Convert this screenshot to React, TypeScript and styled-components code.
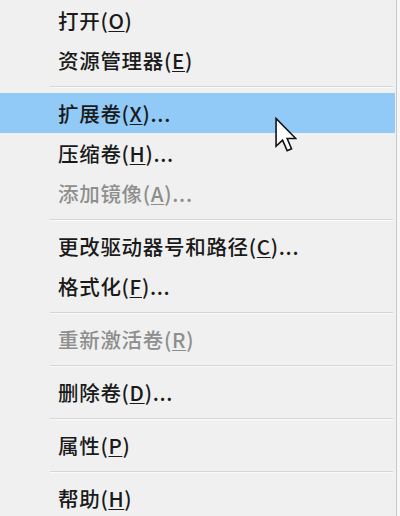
import React, { FunctionComponent } from 'react'
import styled, { createGlobalStyle } from 'styled-components'

const GlobalStyle = createGlobalStyle`
  html, body {
    margin: 0;
    padding: 0;
    background: #f7f7f7;
  }
  body {
    width: 400px;
    height: 516px;
    overflow: hidden;
  }
`

const Menu = styled.div`
  position: relative;
  width: 396px;
  height: 516px;
  overflow: hidden;
  background: #f0f0f0;
  border-right: 1px solid #c9c9c9;
  font-family: "Noto Sans CJK SC", "Noto Sans", sans-serif;
  font-size: 20.5px;
  font-weight: 500;
`

const Item = styled.div<{ $active?: boolean; $disabled?: boolean }>`
  display: flex;
  align-items: center;
  height: 40px;
  padding-left: 58px;
  margin-right: 1px;
  color: ${p => (p.$disabled ? '#8e8e8e' : '#1a1a1a')};
  background: ${p => (p.$active ? '#91c9f7' : 'transparent')};
  white-space: nowrap;
  letter-spacing: 0.7px;
`

const Key = styled.span`
  text-decoration: underline;
  text-underline-offset: 2px;
  text-decoration-thickness: 1px;
`

const Separator = styled.div`
  height: 13px;
  display: flex;
  align-items: center;
  padding: 0 3px 0 50px;

  &::after {
    content: '';
    flex: 1;
    height: 1px;
    background: #d6d6d6;
    box-shadow: 0 1px 0 #fafafa;
  }
`

const Cursor = styled.svg`
  position: absolute;
  left: 275px;
  top: 117px;
  width: 22px;
  height: 36px;
`

type Entry =
  | { sep: true }
  | { label: string; key: string; tail?: string; active?: boolean; disabled?: boolean }

const entries: Entry[] = [
  { label: '打开', key: 'O' },
  { label: '资源管理器', key: 'E' },
  { sep: true },
  { label: '扩展卷', key: 'X', tail: '...', active: true },
  { label: '压缩卷', key: 'H', tail: '...' },
  { label: '添加镜像', key: 'A', tail: '...', disabled: true },
  { sep: true },
  { label: '更改驱动器号和路径', key: 'C', tail: '...' },
  { label: '格式化', key: 'F', tail: '...' },
  { sep: true },
  { label: '重新激活卷', key: 'R', disabled: true },
  { sep: true },
  { label: '删除卷', key: 'D', tail: '...' },
  { sep: true },
  { label: '属性', key: 'P' },
  { sep: true },
  { label: '帮助', key: 'H' },
]

const App: FunctionComponent = () => (
  <>
    <GlobalStyle />
    <Menu>
      {entries.map((e, i) =>
        'sep' in e ? (
          <Separator key={i} />
        ) : (
          <Item key={i} $active={e.active} $disabled={e.disabled}>
            {e.label}(<Key>{e.key}</Key>){e.tail}
          </Item>
        )
      )}
      <Cursor viewBox="0 0 12.5 20">
        <path
          d="M0.6 0.6 L0.6 16.4 L4.3 12.9 L6.9 18.9 L9.4 17.8 L6.9 12 L11.8 12 Z"
          fill="#fff"
          stroke="#111"
          strokeWidth="0.9"
          strokeLinejoin="miter"
        />
      </Cursor>
    </Menu>
  </>
)

export default App
